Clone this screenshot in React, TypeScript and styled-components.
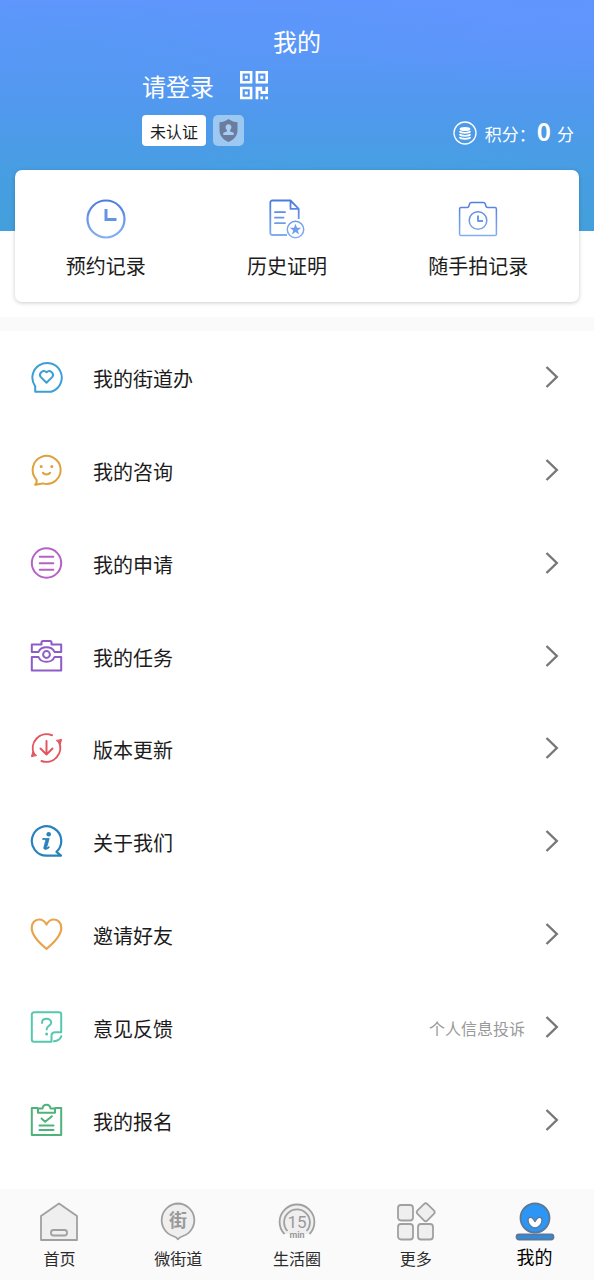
import React from 'react';
import styled, { createGlobalStyle } from 'styled-components';

const GlobalStyle = createGlobalStyle`
  *, *::before, *::after { box-sizing: border-box; }
  body {
    margin: 0;
    background: #fff;
    color: #1c1c1c;
    font-family: "Noto Sans CJK SC", "Noto Sans", sans-serif;
  }
  button { font: inherit; border: 0; padding: 0; background: none; cursor: pointer; }
  a { color: inherit; text-decoration: none; }
  ul { list-style: none; margin: 0; padding: 0; }
  svg { display: block; flex: none; }
`;

const Page = styled.div`
  display: flex;
  flex-direction: column;
  min-height: 100vh;
`;

const Hero = styled.header`
  padding: 23px 15px 15px;
  background-image:
    radial-gradient(ellipse 40% 30% at 62% 88%, rgba(64, 170, 220, 0.4), transparent),
    radial-gradient(ellipse 30% 25% at 12% 22%, rgba(80, 155, 235, 0.3), transparent),
    radial-gradient(ellipse 40% 30% at 92% 10%, rgba(98, 148, 255, 0.6), transparent),
    linear-gradient(#5f96fd 0%, #5997f7 25%, #4f99ec 50%, #479ee2 75%, #439fdb 100%);
  background-size: 100% 231px;
  background-repeat: no-repeat;
`;

const Title = styled.h1`
  margin: 0;
  color: #fff;
  font-size: 24px;
  font-weight: 400;
  line-height: 36px;
  text-align: center;
`;

const Profile = styled.section`
  display: flex;
  align-items: flex-end;
  justify-content: space-between;
  padding: 8px 5px 0 127px;
  color: #fff;
`;

const Account = styled.div`
  display: grid;
  gap: 11px;
`;

const AccountRow = styled.div<{ $gap: number }>`
  display: flex;
  align-items: center;
  gap: ${(p) => p.$gap}px;
`;

const Login = styled.button`
  color: #fff;
  font-size: 24px;
  line-height: 37px;
`;

const Verify = styled.button`
  height: 31px;
  padding: 2px 8px 0;
  border-radius: 4px;
  background: #fff;
  color: #1c1c1c;
  font-size: 16px;
  line-height: 29px;
`;

const ShieldBadge = styled.span`
  display: grid;
  place-items: center;
  width: 31px;
  height: 31px;
  border-radius: 5px;
  background: #9dc8f2;
`;

const Score = styled.p`
  display: flex;
  align-items: center;
  gap: 8px;
  margin: 0;
  font-size: 17px;
  line-height: 24px;
`;

const ScoreText = styled.span`
  display: flex;
  align-items: baseline;
`;

const ScoreValue = styled.strong`
  margin: 0 6px 0 1px;
  font-size: 24px;
  font-weight: 700;
`;

const ShortcutCard = styled.nav`
  display: flex;
  justify-content: space-around;
  margin-top: 24px;
  padding: 29px 0 21px;
  border-radius: 7px;
  background: #fff;
  box-shadow: 0 1px 4px rgba(0, 0, 0, 0.2);
`;

const Shortcut = styled.a`
  display: flex;
  flex-direction: column;
  align-items: center;
  gap: 12px;
  font-size: 20px;
  line-height: 30px;
`;

const Menu = styled.ul`
  display: grid;
  grid-auto-rows: 1fr;
  min-height: 849px;
  border-top: 14px solid #fafafa;
`;

const MenuLink = styled.a`
  display: flex;
  align-items: center;
  height: 100%;
  padding: 0 35px 0 30px;
`;

const MenuLabel = styled.span`
  flex: 1;
  margin-left: 30px;
  padding-top: 4px;
  font-size: 20px;
  line-height: 30px;
`;

const MenuNote = styled.span`
  margin-right: 20px;
  padding-top: 2px;
  color: #999;
  font-size: 16px;
  line-height: 24px;
`;

const TabBar = styled.nav`
  position: sticky;
  bottom: 0;
  display: flex;
  margin-top: auto;
  padding: 12px 0 6px;
  background: #fafafa;
`;

const Tab = styled.a<{ $active?: boolean }>`
  flex: 1;
  display: flex;
  flex-direction: column;
  align-items: center;
  gap: ${(p) => (p.$active ? 0 : 2)}px;
  color: ${(p) => (p.$active ? '#000' : '#2b2b2b')};
  font-size: ${(p) => (p.$active ? 18 : 16)}px;
  line-height: 31px;
`;

const BlueFade = ({ id }: { id: string }) => (
  <linearGradient id={id} gradientUnits="userSpaceOnUse" x1="0" y1="0" x2="0" y2="40">
    <stop offset="0" stopColor="#4a7bdc" />
    <stop offset="1" stopColor="#86b2f4" />
  </linearGradient>
);

const QrIcon = () => (
  <svg width="28" height="29" viewBox="0 0 28 29" fill="none" stroke="#fff" strokeWidth="2.6">
    <path d="M1.3 1.3h9.8v10H1.3zM16.9 1.3h9.8v10h-9.8zM1.3 17h9.8v10H1.3z" />
    <path fill="#fff" stroke="none" d="M4.8 4.8h3v3h-3zM20.4 4.8h3v3h-3zM4.8 20.5h3v3h-3zM15.6 15.7h6.6v4.2h3.2v-4.2H28v7.4h-7.4v-3.4h-2.2v8.6h-2.800zM20.4 25.5h2.6v2.8h-2.6zM25.3 25.5H28v2.8h-2.7z" />
  </svg>
);

const ShieldIcon = () => (
  <svg width="19" height="23" viewBox="0 0 19 23">
    <path fill="#6a7d9e" d="M9.500 0C12 2 15 3 18.500 3.200V11c0 6-3.500 9.500-9 12C4 20.500.5 17 .5 11V3.200C4 3 7 2 9.500 0z" />
    <path fill="#a9cdf2" d="M9.500 5.200c1.900 0 2.900 1.400 2.900 3 0 1.200-.6 2.200-1.300 2.800v1.600l3.600 1.200v2.100H4.300v-2.100l3.600-1.200V11c-.7-.6-1.300-1.600-1.300-2.800 0-1.600 1-3 2.900-3z" />
  </svg>
);

const CoinsIcon = () => (
  <svg width="24" height="24" viewBox="0 0 24 24" fill="none" stroke="#fff">
    <circle cx="12" cy="12" r="11" strokeWidth="1.3" />
    <ellipse cx="12" cy="8" rx="5.400" ry="2" fill="#fff" stroke="none" />
    <path strokeWidth="1.900" d="M6.700 10.200c1 2.200 9.600 2.200 10.600 0M6.700 13.200c1 2.200 9.600 2.200 10.600 0M6.700 16.200c1 2.200 9.600 2.200 10.600 0" />
  </svg>
);

const ClockIcon = () => (
  <svg width="40" height="40" viewBox="0 0 40 40" fill="none" stroke="url(#clockFade)">
    <defs><BlueFade id="clockFade" /></defs>
    <circle cx="20" cy="20" r="18.500" strokeWidth="2.200" />
    <path d="M20 10v10.500h10.500" strokeWidth="3" stroke="#6593e8" />
  </svg>
);

const HistoryIcon = () => (
  <svg width="40" height="40" viewBox="0 0 40 40" fill="none" stroke="url(#historyFade)" strokeWidth="1.800" strokeLinejoin="round">
    <defs><BlueFade id="historyFade" /></defs>
    <path d="M20 36H5.300a2 2 0 0 1-2-2V3.500a2 2 0 0 1 2-2H23.500l8.200 8.300V20M23.500 1.500v8.300h8.200" />
    <path d="M8 13.200h10M8 18.700h8.500M8 24.200h10" strokeLinecap="round" />
    <circle cx="28.500" cy="30.500" r="8.200" strokeWidth="1.500" fill="#fff" />
    <path stroke="none" fill="#6f9fec" d="M28.500 24.800l1.500 4h4.200l-3.400 2.600 1.300 4.200-3.600-2.500-3.600 2.500 1.300-4.200-3.400-2.600H27z" />
  </svg>
);

const CameraIcon = () => (
  <svg width="40" height="40" viewBox="0 0 40 40" fill="none" stroke="url(#cameraFade)" strokeWidth="1.500" strokeLinejoin="round">
    <defs><BlueFade id="cameraFade" /></defs>
    <path d="M3 8.500h6.300c1.200 0 1.500-.6 1.800-2l.5-1.700c.3-.9.900-1.300 1.800-1.300h12c.9 0 1.500.4 1.800 1.300l.5 1.700c.3 1.400.8 2 2 2h7.300c.8 0 1.400.6 1.400 1.400v25.300c0 .8-.6 1.400-1.400 1.400H3c-.8 0-1.400-.6-1.400-1.400V9.900c0-.8.6-1.400 1.400-1.400z" />
    <circle cx="20" cy="21.500" r="8.800" />
    <path d="M20 16.500v5.500h5" strokeWidth="1.900" />
  </svg>
);

const MenuSvg = styled.svg.attrs({ width: 33, height: 34, viewBox: '0 0 33 34' })`
  fill: none;
  stroke-width: 2px;
  stroke-linecap: round;
  stroke-linejoin: round;
`;

const OfficeIcon = () => (
  <MenuSvg stroke="#3b9fd6">
    <path d="M5.200 31.800v-5.500A14.700 14.700 0 1 1 22.500 31.300l-1.300.5z" />
    <path d="M16.500 22.800l-5.900-5.900a3.800 3.800 0 0 1 5.900-4.700 3.800 3.800 0 0 1 5.900 4.700z" />
  </MenuSvg>
);

const ConsultIcon = () => (
  <MenuSvg stroke="#e0a03c">
    <path d="M6.200 26.300A14 14 0 1 1 13.500 30.600c-2.500-.3-4.500.9-8.300 1.200 1.600-1.700 2-3.600 1-5.500z" />
    <path d="M12.800 19.700c1.800 2.500 5.600 2.500 7.400 0" />
    <circle cx="11.200" cy="13.500" r="1.500" fill="#e0a03c" stroke="none" />
    <circle cx="21.800" cy="13.500" r="1.500" fill="#e0a03c" stroke="none" />
  </MenuSvg>
);

const ApplyIcon = () => (
  <MenuSvg stroke="#b562c8">
    <circle cx="16.500" cy="17" r="14.700" />
    <path d="M9.700 10.800h13.600M9.700 17.300h13.600M9.700 23.800h13.600" />
  </MenuSvg>
);

const TaskIcon = () => (
  <MenuSvg stroke="#8d5cc6">
    <path d="M8.500 13H1.800V5.500h9.700V3.500c0-1 .5-1.500 1.500-1.500h7c1 0 1.500.5 1.500 1.500v2h9.700V13h-6.700c-1.200-3-4.300-4.800-8-4.800s-6.800 1.800-8 4.800z" />
    <path d="M1.800 18h6.700c1.200 3 4.300 4.800 8 4.800s6.800-1.800 8-4.800h6.700v13.500H1.800z" />
    <circle cx="16.500" cy="15.500" r="3.400" />
  </MenuSvg>
);

const UpdateIcon = () => (
  <MenuSvg stroke="#e3565f">
    <path d="M4 23A14 14 0 0 1 22 4.200M29 11A14 14 0 0 1 11.500 30" />
    <path d="M1.500 25.300l1.200-4.300 3.800 3.300zM31.500 8.700l-1.200 4.300-3.800-3.300z" fill="#e3565f" strokeWidth="1" />
    <path d="M16.500 10v13.500M10.500 17.500l6 6 6-6" />
  </MenuSvg>
);

const AboutIcon = () => (
  <MenuSvg stroke="#2882bd">
    <path d="M26.500 27.800A14.700 14.700 0 1 0 16.500 31.700H31z" strokeWidth="2.200" />
    <circle cx="18.700" cy="10.300" r="2.300" fill="#2882bd" stroke="none" />
    <path d="M13 14.500h6.200l-2.500 8.800c-.1.700.5.600 2.100-.7l.6.800c-2.300 2.400-6.300 3-5.500-.2l1.900-6.900c.1-.6-.2-.8-2.800-.8z" fill="#2882bd" strokeWidth="0.800" />
  </MenuSvg>
);

const InviteIcon = () => (
  <MenuSvg stroke="#e8a44c">
    <path strokeWidth="2.200" d="M16.500 31.800C10 26.500 1.700 19 1.700 11 1.700 5.800 5 2.500 9 2.500c3.300 0 6 2 7.500 5 1.500-3 4.200-5 7.500-5 4 0 7.300 3.300 7.300 8.500 0 8-8.300 15.500-14.800 20.800z" />
  </MenuSvg>
);

const FeedbackIcon = () => (
  <MenuSvg stroke="#56c7b0">
    <path d="M21.500 31.800H4a2.200 2.200 0 0 1-2.200-2.200V4.500A2.200 2.200 0 0 1 4 2.300h25a2.200 2.200 0 0 1 2.200 2.200v17.700h-6c-2.400 0-3.700 1.300-3.700 3.600zM24 31.300c3.500-.5 6.300-2.500 7.200-5" />
    <path d="M12 13c0-5.500 9.200-5.500 9.200-.4 0 3.200-4.600 3.300-4.600 6.900" />
    <circle cx="16.600" cy="24" r="1.500" fill="#56c7b0" stroke="none" />
  </MenuSvg>
);

const SignupIcon = () => (
  <MenuSvg stroke="#50b27b">
    <path d="M7.500 5H1.800v27h29.400V5h-5.700" />
    <path d="M8 9.800V5.500h4.500c.3-2.400 1.800-3.700 4-3.700s3.700 1.300 4 3.700H25v4.300z" />
    <path d="M11.500 15.500l3.700 3.300 6.700-5.600M9.500 22.500h14M9.500 27h14" />
  </MenuSvg>
);

const Chevron = () => (
  <svg width="14" height="24" viewBox="0 0 14 24" fill="none" stroke="#777" strokeWidth="2.400">
    <path d="M1.500 2l10.300 10L1.500 22" />
  </svg>
);

const TabSvg = styled.svg.attrs({ width: 40, height: 40, viewBox: '0 0 40 40' })`
  fill: #efefef;
  stroke: #a0a0a0;
  stroke-width: 1.8px;
  stroke-linejoin: round;
`;

const TabGlyph = styled.text<{ $size: number; $latin?: boolean; $weight: number }>`
  fill: #999;
  stroke: none;
  font-family: ${(p) => (p.$latin ? 'Roboto' : '"Noto Sans CJK SC"')}, sans-serif;
  font-size: ${(p) => p.$size}px;
  font-weight: ${(p) => p.$weight};
  text-anchor: middle;
`;

const HomeIcon = () => (
  <TabSvg>
    <path d="M20 2.500l18 12.500v24H2V15z" />
    <rect x="12" y="29" width="16" height="5.500" rx="2.500" />
  </TabSvg>
);

const StreetIcon = () => (
  <TabSvg>
    <path d="M20 2.500a16.700 16.700 0 0 1 5 32.500c-2.500.7-3.800 1.500-5 3.300-1.200-1.800-2.500-2.600-5-3.300a16.700 16.700 0 0 1 5-32.500z" />
    <TabGlyph x="20" y="26" $size={18} $weight={700}>街</TabGlyph>
  </TabSvg>
);

const CircleIcon = () => (
  <TabSvg>
    <path d="M7.500 33A17.400 17.400 0 1 1 32.500 33" />
    <path d="M10.500 30A12.900 12.900 0 1 1 29.500 30" />
    <TabGlyph x="20" y="27" $size={17} $weight={400} $latin>15</TabGlyph>
    <TabGlyph x="20" y="37" $size={9} $weight={700} $latin>min</TabGlyph>
  </TabSvg>
);

const MoreIcon = () => (
  <TabSvg>
    <rect x="2" y="4" width="15" height="15.500" rx="3" />
    <rect x="2" y="23" width="15" height="15.500" rx="3" />
    <rect x="22" y="23" width="15" height="15.500" rx="3" />
    <rect x="22.700" y="4.200" width="14" height="14" rx="2.500" transform="rotate(45 29.700 11.200)" />
  </TabSvg>
);

const MineIcon = () => (
  <TabSvg>
    <circle cx="20" cy="17" r="14.500" fill="#2b96f5" stroke="#5d7896" />
    <path d="M20 20.500c1-1.200 1.700-2.200 2.200-3 1.500-2 4.800-1.200 4.800 1.500 0 4-3.500 7.800-7 7.800s-7-3.800-7-7.800c0-2.700 3.300-3.500 4.800-1.500.5.8 1.200 1.800 2.200 3z" fill="#fff" stroke="#5d7896" strokeWidth="1.300" />
    <rect x="1.500" y="33.500" width="37" height="5" rx="2.500" fill="#2f8be0" stroke="#5d7896" />
  </TabSvg>
);

const shortcuts = [
  { label: '预约记录', Icon: ClockIcon },
  { label: '历史证明', Icon: HistoryIcon },
  { label: '随手拍记录', Icon: CameraIcon },
];

const menu: { label: string; note?: string; Icon: React.FC }[] = [
  { label: '我的街道办', Icon: OfficeIcon },
  { label: '我的咨询', Icon: ConsultIcon },
  { label: '我的申请', Icon: ApplyIcon },
  { label: '我的任务', Icon: TaskIcon },
  { label: '版本更新', Icon: UpdateIcon },
  { label: '关于我们', Icon: AboutIcon },
  { label: '邀请好友', Icon: InviteIcon },
  { label: '意见反馈', note: '个人信息投诉', Icon: FeedbackIcon },
  { label: '我的报名', Icon: SignupIcon },
];

const tabs = [
  { label: '首页', Icon: HomeIcon },
  { label: '微街道', Icon: StreetIcon },
  { label: '生活圈', Icon: CircleIcon },
  { label: '更多', Icon: MoreIcon },
  { label: '我的', Icon: MineIcon, active: true },
];

export default function App() {
  return (
    <Page>
      <GlobalStyle />
      <Hero>
        <Title>我的</Title>
        <Profile>
          <Account>
            <AccountRow $gap={26}>
              <Login type="button">请登录</Login>
              <button type="button" aria-label="二维码"><QrIcon /></button>
            </AccountRow>
            <AccountRow $gap={7}>
              <Verify type="button">未认证</Verify>
              <ShieldBadge><ShieldIcon /></ShieldBadge>
            </AccountRow>
          </Account>
          <Score>
            <CoinsIcon />
            <ScoreText>
              积分：<ScoreValue>0</ScoreValue>分
            </ScoreText>
          </Score>
        </Profile>
        <ShortcutCard>
          {shortcuts.map(({ label, Icon }) => (
            <Shortcut href="#" key={label}>
              <Icon />
              {label}
            </Shortcut>
          ))}
        </ShortcutCard>
      </Hero>
      <Menu>
        {menu.map(({ label, note, Icon }) => (
          <li key={label}>
            <MenuLink href="#">
              <Icon />
              <MenuLabel>{label}</MenuLabel>
              {note && <MenuNote>{note}</MenuNote>}
              <Chevron />
            </MenuLink>
          </li>
        ))}
      </Menu>
      <TabBar>
        {tabs.map(({ label, Icon, active }) => (
          <Tab href="#" key={label} $active={active} aria-current={active ? 'page' : undefined}>
            <Icon />
            {label}
          </Tab>
        ))}
      </TabBar>
    </Page>
  );
}
